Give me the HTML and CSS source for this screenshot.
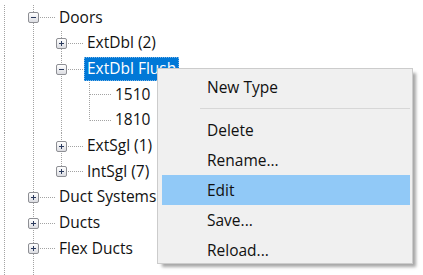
FILE: index.html
```html
<!DOCTYPE html>
<html>
<head>
<meta charset="utf-8">
<link rel="stylesheet" href="styles.css">
</head>
<body>
<div class="tree">
  <div class="row">
    <span class="g0"></span>
    <span class="c t"><span class="exp"><svg width="9" height="9" viewBox="0 0 9 9"><path d="M2 4.5h5" stroke="#2b3b5e"/></svg></span></span>
    <span class="label">Doors</span>
  </div>
  <div class="row">
    <span class="g0"></span><span class="g v"></span>
    <span class="c t"><span class="exp"><svg width="9" height="9" viewBox="0 0 9 9"><path d="M2 4.5h5M4.5 2v5" stroke="#2b3b5e"/></svg></span></span>
    <span class="label">ExtDbl (2)</span>
  </div>
  <div class="row">
    <span class="g0"></span><span class="g v"></span>
    <span class="c t"><span class="exp"><svg width="9" height="9" viewBox="0 0 9 9"><path d="M2 4.5h5" stroke="#2b3b5e"/></svg></span></span>
    <span class="label selected">ExtDbl Flush</span>
  </div>
  <div class="row">
    <span class="g0"></span><span class="g v"></span><span class="g v"></span>
    <span class="c t"></span>
    <span class="label">1510</span>
  </div>
  <div class="row">
    <span class="g0"></span><span class="g v"></span><span class="g v"></span>
    <span class="c l"></span>
    <span class="label">1810</span>
  </div>
  <div class="row">
    <span class="g0"></span><span class="g v"></span>
    <span class="c t"><span class="exp"><svg width="9" height="9" viewBox="0 0 9 9"><path d="M2 4.5h5M4.5 2v5" stroke="#2b3b5e"/></svg></span></span>
    <span class="label">ExtSgl (1)</span>
  </div>
  <div class="row">
    <span class="g0"></span><span class="g v"></span>
    <span class="c l"><span class="exp"><svg width="9" height="9" viewBox="0 0 9 9"><path d="M2 4.5h5M4.5 2v5" stroke="#2b3b5e"/></svg></span></span>
    <span class="label">IntSgl (7)</span>
  </div>
  <div class="row">
    <span class="g0"></span>
    <span class="c t"><span class="exp"><svg width="9" height="9" viewBox="0 0 9 9"><path d="M2 4.5h5M4.5 2v5" stroke="#2b3b5e"/></svg></span></span>
    <span class="label">Duct Systems</span>
  </div>
  <div class="row">
    <span class="g0"></span>
    <span class="c t"><span class="exp"><svg width="9" height="9" viewBox="0 0 9 9"><path d="M2 4.5h5M4.5 2v5" stroke="#2b3b5e"/></svg></span></span>
    <span class="label">Ducts</span>
  </div>
  <div class="row">
    <span class="g0"></span>
    <span class="c t"><span class="exp"><svg width="9" height="9" viewBox="0 0 9 9"><path d="M2 4.5h5M4.5 2v5" stroke="#2b3b5e"/></svg></span></span>
    <span class="label">Flex Ducts</span>
  </div>
  <div class="row">
    <span class="g0"></span><span class="g v"></span>
  </div>
</div>

<div class="menu">
  <div class="item">New Type</div>
  <div class="sep"></div>
  <div class="item">Delete</div>
  <div class="item">Rename...</div>
  <div class="item hover">Edit</div>
  <div class="item">Save...</div>
  <div class="item">Reload...</div>
</div>
</body>
</html>
```

FILE: styles.css
```css
html, body {
  margin: 0;
  padding: 0;
  background: #ffffff;
}
body {
  width: 423px;
  height: 275px;
  overflow: hidden;
  position: relative;
  font-family: "Open Sans", "Noto Sans", sans-serif;
  font-size: 15.5px;
  color: #111111;
}
.tree {
  padding-top: 5px;
  display: flex;
  flex-direction: column;
}
.row {
  display: flex;
  align-items: stretch;
  height: 25.67px;
}
.g0 {
  flex: 0 0 19px;
  background: repeating-linear-gradient(to bottom, #a3a3a3 0 1px, transparent 1px 2px) 4px 0 / 1px 100% no-repeat;
}
.g {
  flex: 0 0 28px;
}
.v {
  background: repeating-linear-gradient(to bottom, #a3a3a3 0 1px, transparent 1px 2px) 14px 0 / 1px 100% no-repeat;
}
.c {
  flex: 0 0 37px;
  display: flex;
  align-items: center;
}
.t {
  background:
    repeating-linear-gradient(to bottom, #a3a3a3 0 1px, transparent 1px 2px) 14px 0 / 1px 100% no-repeat,
    repeating-linear-gradient(to right, #a3a3a3 0 1px, transparent 1px 2px) 15px 50% / 22px 1px no-repeat;
}
.l {
  background:
    repeating-linear-gradient(to bottom, #a3a3a3 0 1px, transparent 1px 2px) 14px 0 / 1px 50% no-repeat,
    repeating-linear-gradient(to right, #a3a3a3 0 1px, transparent 1px 2px) 15px 50% / 22px 1px no-repeat;
}
.exp {
  box-sizing: border-box;
  width: 11px;
  height: 11px;
  margin-left: 9px;
  border: 1px solid #8e8f94;
  border-radius: 2px;
  background: linear-gradient(#ffffff, #dcdde2);
  display: flex;
}
.exp svg {
  display: block;
}
.label {
  align-self: center;
  height: 24px;
  line-height: 23px;
  padding: 0 3px;
  white-space: nowrap;
  box-sizing: border-box;
}
.selected {
  background: #0078d7;
  color: #ffffff;
  outline: 1px dotted #7fb6e6;
  outline-offset: -1px;
}
.menu {
  position: absolute;
  left: 157px;
  top: 68px;
  width: 256px;
  height: 196px;
  box-sizing: border-box;
  overflow: hidden;
  background: #f0f0f0;
  border: 1px solid #cccccc;
  padding: 3px 2px 0 4px;
  box-shadow: 4px 4px 3px -1px rgba(0, 0, 0, 0.35);
  color: #111111;
}
.item {
  height: 30px;
  line-height: 30px;
  padding-left: 45px;
  white-space: nowrap;
}
.item.hover {
  background: #91c9f7;
}
.sep {
  height: 1px;
  background: #d7d7d7;
  margin: 6px 0 6px 38px;
}
```
